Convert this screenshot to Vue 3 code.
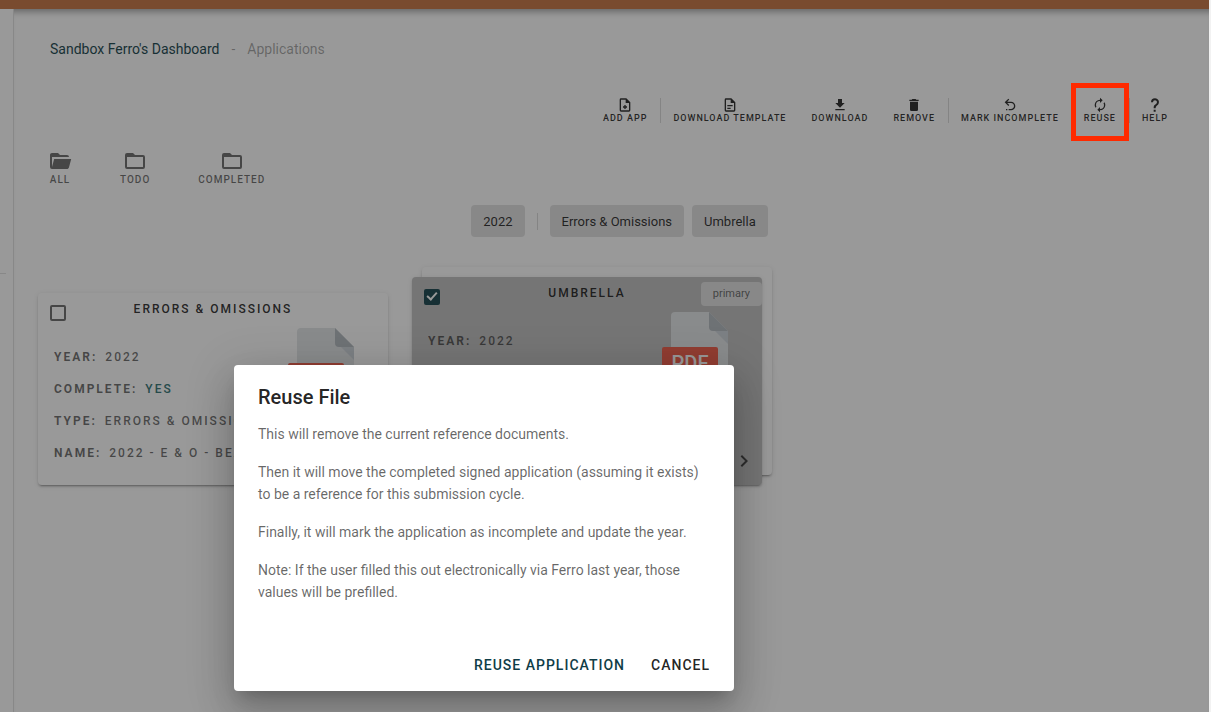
<script setup>
const tools = [
  { label: 'Add App', icon: 'M14 2H6a2 2 0 0 0-2 2v16a2 2 0 0 0 2 2h12a2 2 0 0 0 2-2V8l-6-6m4 18H6V4h7v5h5v11m-7-8h2v2h2v2h-2v2h-2v-2H9v-2h2v-2z', divider: true },
  { label: 'Download Template', icon: 'M6 2a2 2 0 0 0-2 2v16a2 2 0 0 0 2 2h12a2 2 0 0 0 2-2V8l-6-6H6m0 2h7v5h5v11H6V4m2 8v2h8v-2H8m0 4v2h5v-2H8z' },
  { label: 'Download', icon: 'M5 20h14v-2H5m14-9h-4V3H9v6H5l7 7 7-7z' },
  { label: 'Remove', icon: 'M19 4h-3.500l-1-1h-5l-1 1H5v2h14M6 19a2 2 0 0 0 2 2h8a2 2 0 0 0 2-2V7H6v12z', divider: true },
  { label: 'Mark Incomplete', icon: 'M13.500 7a6.500 6.500 0 0 1 6.500 6.500 6.500 6.500 0 0 1-6.500 6.500H10v-2h3.500c2.500 0 4.500-2 4.500-4.500S16 9 13.500 9H7.830l3.080 3.090L9.500 13.500 4 8l5.500-5.500 1.420 1.410L7.830 7h5.670M6 18h2v2H6v-2z' },
  { label: 'Reuse', marked: true, divider: true, icon: 'M12 6v3l4-4-4-4v3a8 8 0 0 0-8 8c0 1.570.46 3.030 1.240 4.260L6.700 14.800A5.900 5.900 0 0 1 6 12a6 6 0 0 1 6-6m6.760 1.740L17.300 9.200c.44.840.7 1.800.7 2.800a6 6 0 0 1-6 6v-3l-4 4 4 4v-3a8 8 0 0 0 8-8c0-1.570-.46-3.030-1.240-4.260z' },
  { label: 'Help', icon: 'M10 19h3v3h-3v-3m2-17c5.350.22 7.680 5.620 4.500 9.670-.83 1-2.170 1.660-2.830 2.500C13 15 13 16 13 17h-3c0-1.670 0-3.080.67-4.080.66-1 2-1.590 2.830-2.250C15.920 8.430 15.320 5.260 12 5a3 3 0 0 0-3 3H6a6 6 0 0 1 6-6z' },
]
const folderOutline = 'M20 18H4V8h16m0-2h-8l-2-2H4a2 2 0 0 0-2 2v12a2 2 0 0 0 2 2h16a2 2 0 0 0 2-2V8a2 2 0 0 0-2-2z'
const filters = [
  { label: 'All', icon: 'M19 20H4a2 2 0 0 1-2-2V6c0-1.110.89-2 2-2h6l2 2h7a2 2 0 0 1 2 2H4v10l2.140-8h17.070l-2.280 8.500c-.23.870-1.010 1.500-1.930 1.500z' },
  { label: 'Todo', icon: folderOutline },
  { label: 'Completed', icon: folderOutline },
]
const cards = [
  {
    id: 'eo', title: 'Errors & Omissions', selected: false,
    fields: [
      { name: 'Year', value: '2022' },
      { name: 'Complete', value: 'Yes', accent: true },
      { name: 'Type', value: 'Errors & Omissions' },
      { name: 'Name', value: '2022 - E & O - Beazley' },
    ],
  },
  {
    id: 'umb', title: 'Umbrella', selected: true, tag: 'primary',
    fields: [
      { name: 'Year', value: '2022' },
      { name: 'Complete', value: 'Yes', accent: true },
      { name: 'Type', value: 'Umbrella' },
    ],
  },
]
</script>

<template>
  <div class="app">
    <header class="bar"></header>
    <div class="body">
      <aside class="rail"><hr class="rail-line"></aside>
      <main class="main">
        <nav class="crumbs" aria-label="Breadcrumb">
          <a href="#dashboard">Sandbox Ferro's Dashboard</a>
          <span>-</span>
          <span>Applications</span>
        </nav>

        <div class="toolbar">
          <template v-for="t in tools" :key="t.label">
            <button type="button" class="tool" :class="{ marked: t.marked }">
              <svg viewBox="0 0 24 24" aria-hidden="true"><path :d="t.icon" /></svg>
              <span>{{ t.label }}</span>
            </button>
            <i v-if="t.divider" class="divider"></i>
          </template>
        </div>

        <div class="filters">
          <button v-for="f in filters" :key="f.label" type="button" class="filter">
            <svg viewBox="0 0 24 24" aria-hidden="true"><path :d="f.icon" /></svg>
            <span>{{ f.label }}</span>
          </button>
        </div>

        <div class="chips">
          <button type="button" class="chip">2022</button>
          <i class="divider short"></i>
          <button type="button" class="chip">Errors &amp; Omissions</button>
          <button type="button" class="chip last">Umbrella</button>
        </div>

        <div class="cards">
          <article v-for="c in cards" :key="c.id" class="card" :class="{ selected: c.selected }">
            <div class="face">
              <input type="checkbox" class="check" :checked="c.selected" :aria-label="c.title">
              <h2>{{ c.title }}</h2>
              <dl>
                <div v-for="f in c.fields" :key="f.name">
                  <dt>{{ f.name }}:</dt>
                  <dd :class="{ accent: f.accent }">{{ f.value }}</dd>
                </div>
              </dl>
              <span v-if="c.tag" class="tag">{{ c.tag }}</span>
              <svg class="pdf" viewBox="0 0 66 76" aria-hidden="true">
                <path fill="#e2e5e7" d="M13 0h34l19 19v53a4 4 0 0 1-4 4H13a4 4 0 0 1-4-4V4a4 4 0 0 1 4-4z" />
                <path fill="#b0b7bd" d="M47 0l19 19H51a4 4 0 0 1-4-4z" />
                <path fill="#cad1d8" d="M53 19h13v13z" />
                <rect fill="#f15642" y="35" width="56" height="29" rx="2" />
                <text x="28" y="58" text-anchor="middle">PDF</text>
              </svg>
              <button v-if="c.selected" type="button" class="next" aria-label="Next">
                <svg viewBox="0 0 24 24"><path d="M8.590 16.580L13.170 12 8.590 7.410 10 6l6 6-6 6-1.410-1.420z" /></svg>
              </button>
            </div>
          </article>
        </div>
      </main>
    </div>

    <div class="scrim">
      <section class="dialog" role="dialog" aria-modal="true" aria-labelledby="reuse-title">
        <h1 id="reuse-title">Reuse File</h1>
        <div class="copy">
          <p>This will remove the current reference documents.</p>
          <p>Then it will move the completed signed application (assuming it exists) to be a reference for this submission cycle.</p>
          <p>Finally, it will mark the application as incomplete and update the year.</p>
          <p>Note: If the user filled this out electronically via Ferro last year, those values will be prefilled.</p>
        </div>
        <footer>
          <button type="button" class="primary">Reuse Application</button>
          <button type="button">Cancel</button>
        </footer>
      </section>
    </div>
  </div>
</template>

<style>
body { background: #f2f2f2; }
</style>

<style scoped>
* { box-sizing: border-box; }
.app {
  position: relative;
  display: flex;
  flex-direction: column;
  min-height: 100vh;
  margin-right: 2px;
  background: #fff;
  color: rgba(0, 0, 0, .87);
  font-family: Roboto, "Liberation Sans", sans-serif;
}
button {
  border: 0;
  background: none;
  color: inherit;
  font-family: inherit;
  padding: 0;
}
svg { fill: currentColor; }
.bar { height: 9px; background: #c46f3b; }
.body { display: flex; flex: 1; }
.rail { width: 14px; border-right: 1px solid #e0e0e0; }
.rail-line { width: 6px; margin: 264px 0 0; border: 0; border-top: 1px solid #e0e0e0; }
.main {
  flex: 1;
  padding: 0 28px 0 24px;
  box-shadow: inset 0 8px 6px -5px rgba(0, 0, 0, .35);
}
.crumbs {
  display: flex;
  gap: 12px;
  padding: 29px 12px 0;
  font-size: 14px;
  line-height: 22px;
  color: rgba(0, 0, 0, .38);
}
.crumbs a { color: #0f3d47; text-decoration: none; }
.toolbar {
  display: flex;
  justify-content: flex-end;
  align-items: center;
  margin-top: 22px;
  height: 57px;
}
.tool {
  display: flex;
  flex-direction: column;
  align-items: center;
  padding: 0 13px 0 12px;
  font-size: 9px;
  font-weight: 500;
  line-height: 11px;
  letter-spacing: 1px;
  text-transform: uppercase;
}
.tool svg { width: 16px; height: 16px; }
.tool.marked { position: relative; }
.tool.marked::after {
  content: "";
  position: absolute;
  z-index: 3;
  inset: -14px 0 -17px -1px;
  border: 5px solid #ff2a00;
}
.divider { width: 1px; height: 25px; background: rgba(0, 0, 0, .15); }
.filters { display: flex; gap: 48px; padding: 10px 10px 0; color: rgba(0, 0, 0, .6); }
.filter {
  display: flex;
  flex-direction: column;
  align-items: center;
  font-size: 10px;
  font-weight: 500;
  line-height: 14px;
  letter-spacing: 1px;
  text-transform: uppercase;
}
.filter svg { width: 24px; height: 24px; }
.chips {
  display: flex;
  justify-content: center;
  align-items: center;
  margin-top: 18px;
  padding-left: 20px;
}
.chip {
  height: 32px;
  padding: 0 12px;
  border-radius: 4px;
  background: #e0e0e0;
  font-size: 13px;
}
.chip.last { margin-left: 8px; }
.divider.short { height: 17px; margin: 0 12px; }
.cards { display: flex; align-items: flex-end; gap: 24px; margin-top: 40px; }
.card { position: relative; flex: none; width: 350px; }
.face {
  position: relative;
  padding: 8px 16px 16px;
  border-radius: 4px;
  background: #fff;
  box-shadow: 0 3px 1px -2px rgba(0, 0, 0, .2), 0 2px 2px rgba(0, 0, 0, .14), 0 1px 5px rgba(0, 0, 0, .12);
}
.selected .face { background: #bdbdbd; padding-bottom: 64px; }
.selected::before {
  content: "";
  position: absolute;
  inset: -10px -10px 10px 10px;
  border-radius: 4px;
  background: #fff;
  box-shadow: 0 3px 1px -2px rgba(0, 0, 0, .2), 0 2px 2px rgba(0, 0, 0, .14), 0 1px 5px rgba(0, 0, 0, .12);
}
.check {
  appearance: none;
  position: absolute;
  left: 12px;
  top: 12px;
  width: 16px;
  height: 16px;
  margin: 0;
  border: 2px solid rgba(0, 0, 0, .6);
  border-radius: 2px;
}
.check:checked { border-color: #0f3d47; background: #0f3d47; }
.check:checked::after {
  content: "";
  position: absolute;
  left: 3px;
  top: -1px;
  width: 6px;
  height: 10px;
  box-sizing: border-box;
  border: solid #fff;
  border-width: 0 2px 2px 0;
  transform: rotate(42deg);
}
h2 {
  margin: 0;
  font-size: 12px;
  font-weight: 500;
  line-height: 16px;
  letter-spacing: 2px;
  text-align: center;
  text-transform: uppercase;
}
dl {
  margin: 24px 0 0;
  font-size: 12px;
  line-height: 32px;
  letter-spacing: 2px;
  text-transform: uppercase;
  color: rgba(0, 0, 0, .6);
}
dl div { display: flex; gap: 8px; white-space: nowrap; overflow: hidden; }
dt { font-weight: 700; }
dd { margin: 0; font-weight: 500; }
.accent { color: #2b6f6f; }
.tag {
  position: absolute;
  right: 0;
  top: 5px;
  padding: 0 12px;
  border-radius: 4px;
  background: #e0e0e0;
  font-size: 11px;
  line-height: 24px;
  color: rgba(0, 0, 0, .6);
}
.pdf { position: absolute; right: 34px; top: 35px; width: 66px; height: 76px; }
.pdf text { fill: #fff; font-size: 20px; font-weight: 500; }
.next {
  position: absolute;
  right: 6px;
  bottom: 12px;
  width: 24px;
  height: 24px;
  color: rgba(0, 0, 0, .7);
}
.scrim {
  position: absolute;
  z-index: 2;
  inset: 0;
  display: flex;
  align-items: flex-end;
  padding: 0 0 21px 234px;
  background: rgba(33, 33, 33, .46);
}
.dialog {
  width: 500px;
  border-radius: 4px;
  background: #fff;
  box-shadow: 0 11px 15px -7px rgba(0, 0, 0, .2), 0 24px 38px 3px rgba(0, 0, 0, .14), 0 9px 46px 8px rgba(0, 0, 0, .12);
}
h1 {
  margin: 0;
  padding: 16px 24px 10px;
  font-size: 20px;
  font-weight: 500;
  line-height: 32px;
}
.copy { padding: 0 24px 20px; font-size: 14px; line-height: 22px; color: rgba(0, 0, 0, .6); }
.copy p { margin: 0 0 16px; }
footer { display: flex; justify-content: flex-end; gap: 10px; padding: 8px 16px; }
footer button {
  height: 36px;
  padding: 0 8px;
  font-size: 14px;
  font-weight: 500;
  letter-spacing: 1px;
  text-transform: uppercase;
}
footer .primary { color: #0f3d47; }
</style>
